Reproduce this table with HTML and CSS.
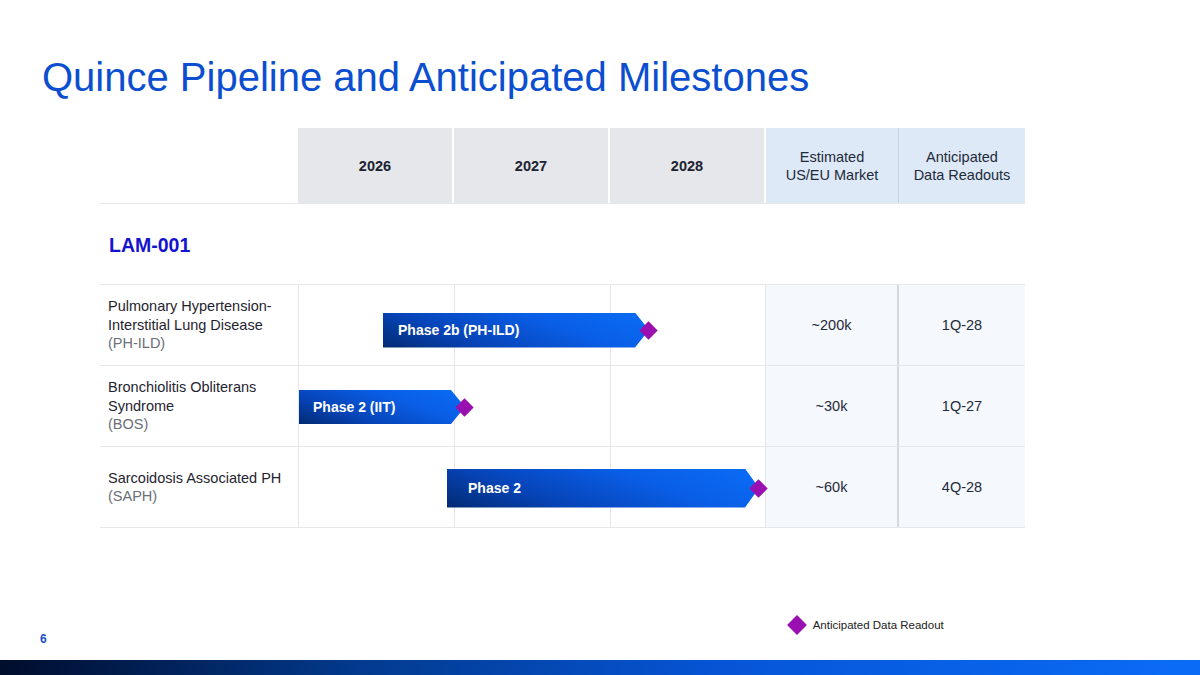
FILE: index.html
```html
<!DOCTYPE html>
<html>
<head>
<meta charset="utf-8">
<link rel="stylesheet" href="styles.css">
</head>
<body>
<div class="slide">
  <h1 class="title">Quince Pipeline and Anticipated Milestones</h1>
  <div class="table">
    <div class="row head">
      <div class="cell blank"></div>
      <div class="cell year">2026</div>
      <div class="cell year">2027</div>
      <div class="cell year">2028</div>
      <div class="cell mkt">Estimated<br>US/EU Market</div>
      <div class="cell rd">Anticipated<br>Data Readouts</div>
    </div>
    <div class="row group">
      <div class="group-label">LAM-001</div>
    </div>
    <div class="row data">
      <div class="cell label"><div class="label-text">Pulmonary Hypertension-<br>Interstitial Lung Disease<br><span class="abbr">(PH-ILD)</span></div></div>
      <div class="cell timeline">
        <div class="bar b1" style="margin-left:84px;width:266px"><span>Phase 2b (PH-ILD)</span></div>
        <div class="diamond d1"></div>
      </div>
      <div class="cell val mk">~200k</div>
      <div class="cell val rdv">1Q-28</div>
    </div>
    <div class="row data">
      <div class="cell label"><div class="label-text">Bronchiolitis Obliterans<br>Syndrome<br><span class="abbr">(BOS)</span></div></div>
      <div class="cell timeline">
        <div class="bar b2" style="margin-left:0px;width:166px"><span>Phase 2 (IIT)</span></div>
        <div class="diamond d2"></div>
      </div>
      <div class="cell val mk">~30k</div>
      <div class="cell val rdv">1Q-27</div>
    </div>
    <div class="row data">
      <div class="cell label"><div class="label-text">Sarcoidosis Associated PH<br><span class="abbr">(SAPH)</span></div></div>
      <div class="cell timeline">
        <div class="bar b3" style="margin-left:148px;width:313px"><span>Phase 2</span></div>
        <div class="diamond d3"></div>
      </div>
      <div class="cell val mk">~60k</div>
      <div class="cell val rdv">4Q-28</div>
    </div>
  </div>
  <div class="foot">
    <div class="page-num">6</div>
    <div class="legend"><span class="legend-diamond"></span><span class="legend-text">Anticipated Data Readout</span></div>
  </div>
  <div class="bottom-bar"></div>
</div>
</body>
</html>
```
FILE: styles.css
```css
* { box-sizing: border-box; }
html, body { margin: 0; padding: 0; background: #fff; }
body { font-family: "Liberation Sans", Arial, sans-serif; color: #1f2430; }
.slide { width: 1200px; height: 675px; display: flex; flex-direction: column; overflow: hidden; }
.title {
  margin: 54px 0 0 42px;
  font-size: 40px;
  font-weight: normal;
  color: #0b4fd0;
  line-height: 46px;
}
.table { margin: 28px 0 0 100px; width: 925px; display: flex; flex-direction: column; }
.row { display: grid; grid-template-columns: 198px 156px 156px 156px 133px 126px; }
.row.head { height: 76px; border-bottom: 1px solid #e6e7ea; }
.cell { display: flex; align-items: center; justify-content: center; text-align: center; font-size: 14.5px; line-height: 18px; }
.head .year { background: #e5e7ea; font-weight: bold; border-right: 2px solid #fff; color: #1c2230; }
.head .mkt { background: #dde9f7; border-right: 1px solid #c8d2de; color: #1f2a3a; }
.head .rd { background: #dde9f7; color: #1f2a3a; }
.row.group { display: flex; align-items: center; height: 81px; border-bottom: 1px solid #e6e7ea; }
.group-label { margin-left: 9px; font-size: 19.5px; font-weight: bold; color: #1414cf; padding-top: 2px; }
.row.data { grid-template-columns: 198px 468px 133px 126px; height: 81px; border-bottom: 1px solid #e6e7ea; }
.label { justify-content: flex-start; text-align: left; padding-left: 8px; color: #1f2430; }
.label-text { line-height: 18.5px; white-space: nowrap; }
.abbr { color: #6b6f77; }
.timeline {
  justify-content: flex-start;
  border-left: 1px solid #e6e7ea;
  border-right: 1px solid #e6e7ea;
  background-image: linear-gradient(#e6e7ea, #e6e7ea), linear-gradient(#e6e7ea, #e6e7ea);
  background-size: 1px 100%;
  background-position: 155px 0, 311px 0;
  background-repeat: no-repeat;
}
.bar {
  display: flex;
  align-items: center;
  background: linear-gradient(200deg, #0a6cf6 0%, #0a5ee6 35%, #0644b8 70%, #032a72 100%);
  clip-path: polygon(0 0, calc(100% - 14px) 0, 100% 50%, calc(100% - 14px) 100%, 0 100%);
  color: #fff;
  font-weight: bold;
  font-size: 14px;
  text-align: left;
}
.b1 { height: 35px; margin-top: 10px; padding-left: 15px; }
.b2 { height: 34px; margin-top: 2px; padding-left: 14px; }
.b3 { height: 39px; margin-top: 2px; padding-left: 21px; }
.diamond {
  width: 13px; height: 13px;
  background: #9a0fb0;
  transform: rotate(45deg);
  margin-left: -7px;
  flex: none;
}
.d1 { margin-top: 10px; }
.d2 { margin-top: 2px; }
.d3 { margin-top: 2px; }
.val { font-size: 14.5px; background: #f5f8fc; color: #1f2a3a; }
.mk { border-right: 2px solid #d3d9e0; }
.foot { display: flex; align-items: center; height: 40px; margin-top: 80px; }
.page-num { margin-left: 40px; margin-top: 22px; font-size: 12px; font-weight: bold; color: #1a4fc8; }
.legend { display: flex; align-items: center; margin-left: 743px; margin-top: -6px; }
.legend-diamond { width: 14px; height: 14px; background: #9a0fb0; transform: rotate(45deg); display: inline-block; }
.legend-text { margin-left: 9px; font-size: 11.5px; color: #222; }
.bottom-bar { margin-top: auto; height: 15px; background: linear-gradient(to right, #000d2c 0%, #023a8e 30%, #0655d6 60%, #0a6cf6 100%); }
```
